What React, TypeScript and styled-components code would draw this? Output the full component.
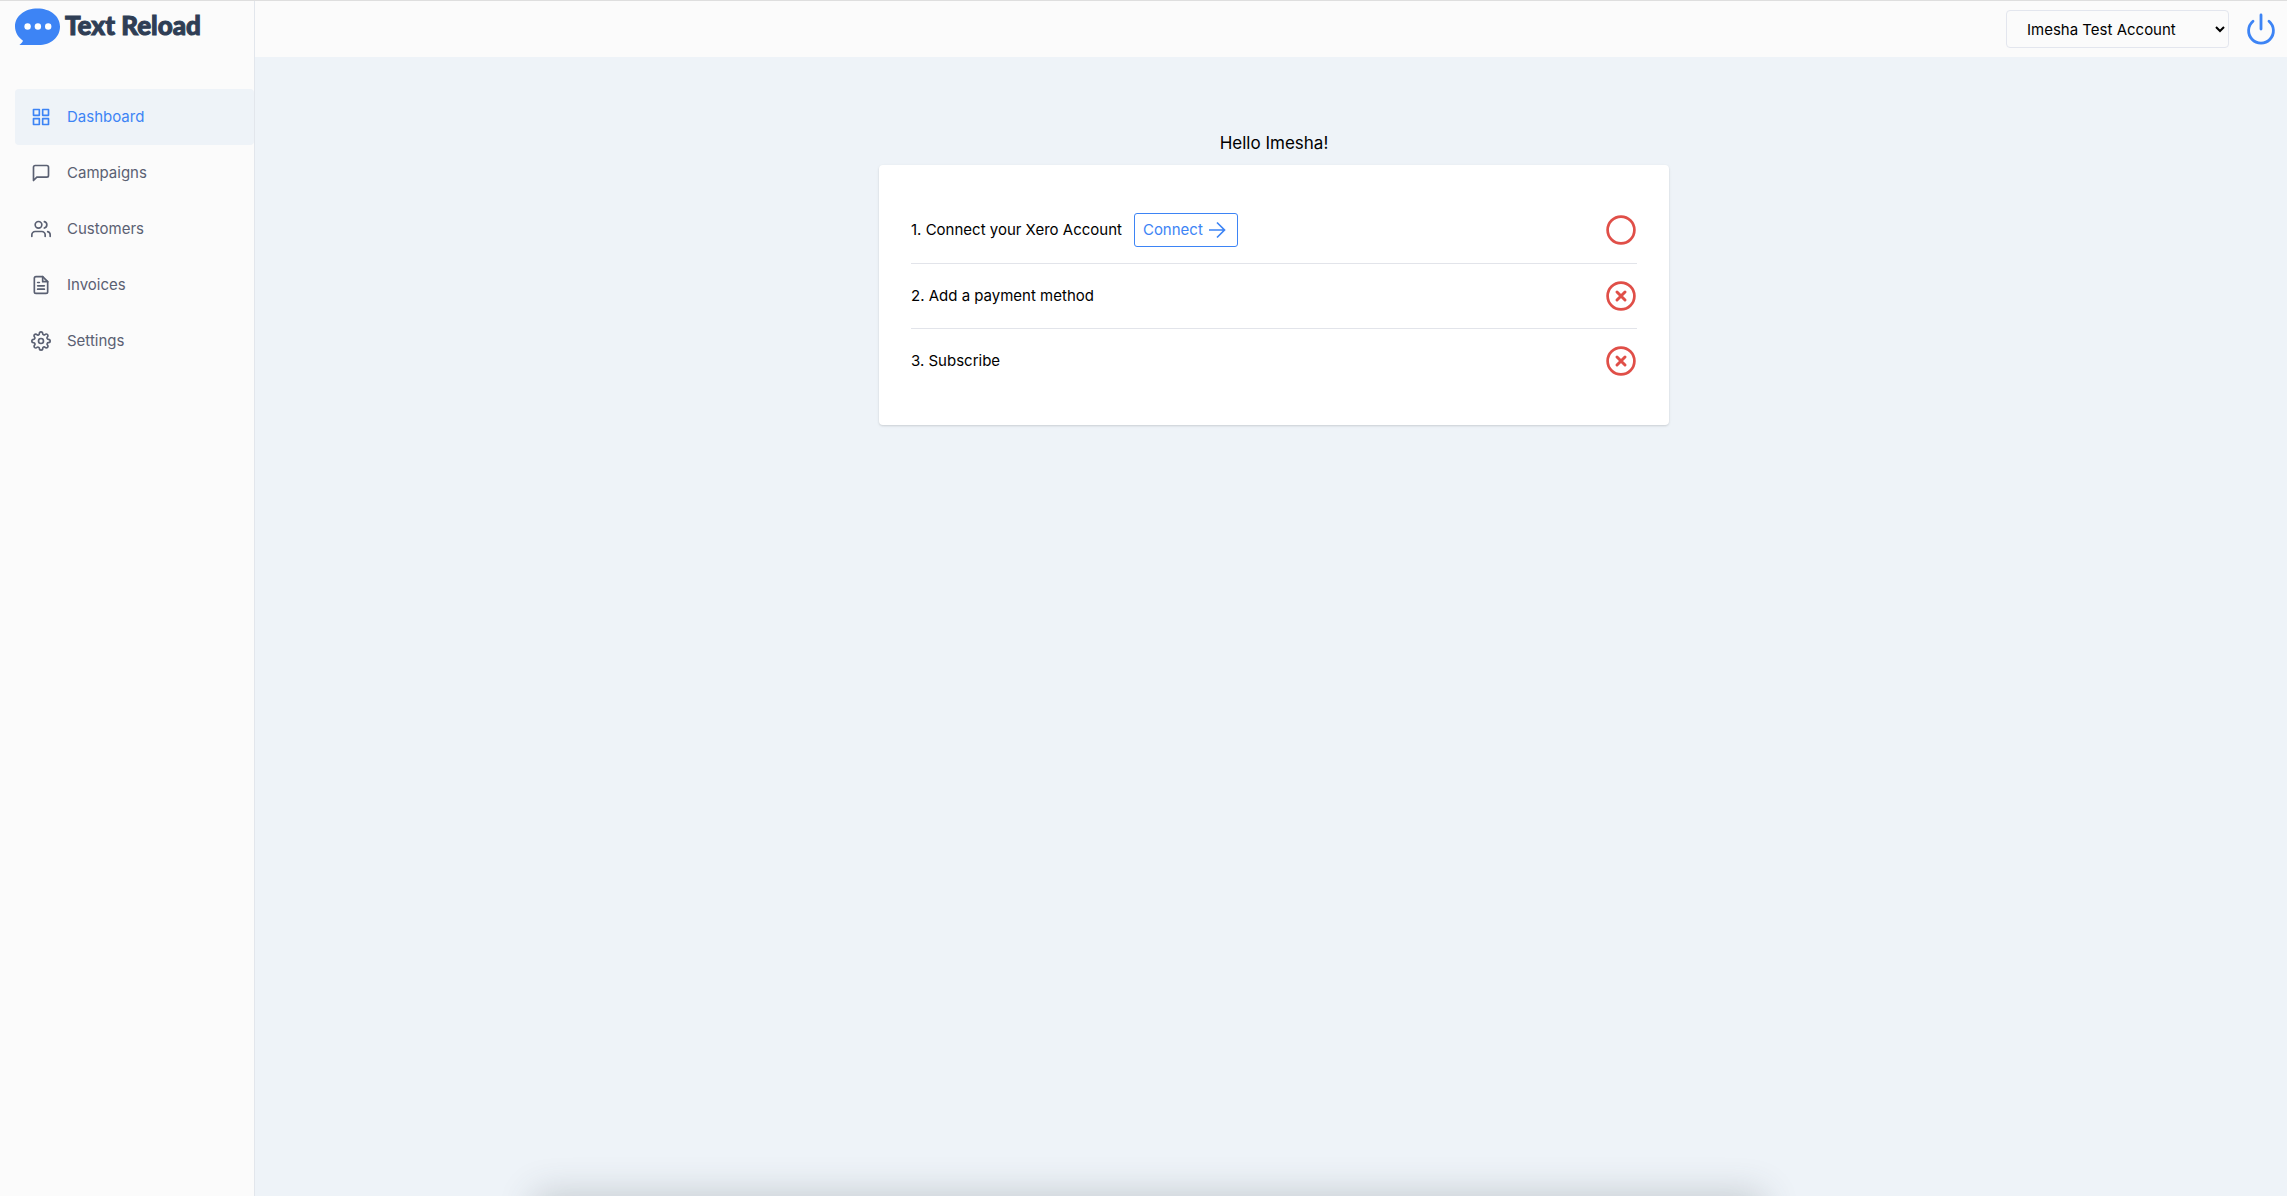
import React from "react";
import styled, { createGlobalStyle, css } from "styled-components";
import { FiFileText, FiGrid, FiMessageSquare, FiSettings, FiUsers } from "react-icons/fi";

const Global = createGlobalStyle`
  *, *::before, *::after { box-sizing: border-box; }
  body {
    margin: 0;
    background: #eef3f8;
    color: #000;
    font-family: Inter, "Liberation Sans", sans-serif;
    font-size: 15px;
    line-height: 24px;
  }
`;

const Shell = styled.div`
  display: flex;
  min-height: 100vh;
  border-top: 1px solid #dedede;
  position: relative;
  overflow: hidden;
`;

const Sidebar = styled.aside`
  flex: 0 0 255px;
  background: #fbfbfb;
  border-right: 1px solid #e2e6ec;
  padding-left: 15px;
`;

const Logo = styled.a`
  display: flex;
  align-items: center;
  gap: 4px;
  height: 52px;
  color: #2f3e55;
  text-decoration: none;
`;

const LogoText = styled.span`
  padding-bottom: 4px;
  font-family: Lato, sans-serif;
  font-size: 26px;
  font-weight: 900;
  line-height: 32px;
  white-space: nowrap;
  -webkit-text-stroke: 1px #2f3e55;
`;

const Nav = styled.nav`
  display: flex;
  flex-direction: column;
  margin-top: 36px;
`;

const NavLink = styled.a<{ $active?: boolean }>`
  display: flex;
  align-items: center;
  gap: 16px;
  height: 56px;
  padding: 0 16px;
  border-radius: 4px;
  color: #5a6072;
  text-decoration: none;
  ${(p) => p.$active && css`
    background: #eef3f8;
    color: #3d84f5;
  `}
`;

const Content = styled.div`
  flex: 1;
  min-width: 0;
`;

const TopBar = styled.header`
  display: flex;
  align-items: center;
  justify-content: flex-end;
  gap: 16px;
  height: 56px;
  padding-right: 10px;
  background: #fbfbfb;
`;

const AccountSelect = styled.select`
  width: 223px;
  height: 38px;
  padding: 0 0 0 16px;
  border: 1px solid #e3e6ee;
  border-radius: 4px;
  background: #fbfbfb;
  color: #000;
  font: inherit;
`;

const IconButton = styled.button`
  display: flex;
  padding: 0;
  border: 0;
  background: none;
  color: #3d84f5;
  cursor: pointer;
`;

const Main = styled.main`
  display: flex;
  flex-direction: column;
  align-items: center;
  gap: 8px;
  padding: 72px 16px 32px 22px;
`;

const Greeting = styled.h1`
  margin: 0;
  font-size: 17px;
  font-weight: 400;
  line-height: 28px;
`;

const Card = styled.section`
  width: 100%;
  max-width: 790px;
  padding: 32px;
  border-radius: 4px;
  background: #fff;
  box-shadow: 0 1px 3px rgba(0, 0, 0, 0.1), 0 1px 2px rgba(0, 0, 0, 0.06);
`;

const Steps = styled.ul`
  margin: 0;
  padding: 0;
  list-style: none;
`;

const Step = styled.li`
  display: flex;
  align-items: center;
  justify-content: space-between;
  padding: 16px 0;
  & + & { border-top: 1px solid #e2e4ea; }
`;

const StepLabel = styled.div`
  display: flex;
  align-items: center;
  gap: 12px;
`;

const ConnectButton = styled.button`
  display: flex;
  align-items: center;
  gap: 2px;
  height: 34px;
  padding: 0 8px;
  border: 1px solid #3d84f5;
  border-radius: 3px;
  background: #fff;
  color: #3d84f5;
  font: inherit;
  cursor: pointer;
`;

const DockShadow = styled.div`
  position: absolute;
  top: 100%;
  left: 23.5%;
  right: 23%;
  height: 40px;
  box-shadow: 0 0 36px 2px rgba(60, 70, 80, 0.24);
`;

const LogoMark = () => (
  <svg width="46" height="38" viewBox="0 0 46 38" aria-hidden="true">
    <path d="M22.500 0.500C9.500 0.500 0 8.300 0 18.300c0 6 3 11 8 14.400-.7 1.600-2 3-3.600 4.400H23.500c12.500 0 21.500-8 21.500-18.600C45 8.300 35.500.5 22.500.5z" fill="#3d84f5" />
    <g fill="#fff">
      <circle cx="12.600" cy="18.500" r="3.200" />
      <circle cx="22.900" cy="18.500" r="3.200" />
      <circle cx="33.200" cy="18.500" r="3.200" />
    </g>
  </svg>
);

const PowerIcon = () => (
  <svg width="32" height="32" viewBox="0 0 32 32" fill="none" stroke="currentColor" strokeWidth="2.800" strokeLinecap="round" aria-hidden="true">
    <path d="M16 2v14M8 8.200a12.400 12.400 0 1 0 16 0" />
  </svg>
);

const ArrowIcon = () => (
  <svg width="24" height="24" viewBox="0 0 24 24" fill="none" stroke="currentColor" strokeWidth="1.700" aria-hidden="true">
    <path d="M4 12h15.500M12 4.500l7.500 7.500-7.500 7.500" />
  </svg>
);

const StatusIcon = ({ failed }: { failed?: boolean }) => (
  <svg width="32" height="32" viewBox="0 0 32 32" fill="none" stroke="#e04f48" strokeWidth="2.700" strokeLinecap="round" role="img" aria-label={failed ? "Incomplete" : "Pending"}>
    <circle cx="16" cy="16" r="13.400" />
    {failed && <path strokeWidth="3" d="M12 12l8 8M20 12l-8 8" />}
  </svg>
);

const links = [
  { label: "Dashboard", Icon: FiGrid },
  { label: "Campaigns", Icon: FiMessageSquare },
  { label: "Customers", Icon: FiUsers },
  { label: "Invoices", Icon: FiFileText },
  { label: "Settings", Icon: FiSettings },
];

export default function App() {
  return (
    <>
      <Global />
      <Shell>
        <Sidebar>
          <Logo href="#">
            <LogoMark />
            <LogoText>Text Reload</LogoText>
          </Logo>
          <Nav>
            {links.map(({ label, Icon }, i) => (
              <NavLink key={label} href="#" $active={i === 0}>
                <Icon size={20} />
                {label}
              </NavLink>
            ))}
          </Nav>
        </Sidebar>
        <Content>
          <TopBar>
            <AccountSelect aria-label="Account">
              <option>Imesha Test Account</option>
            </AccountSelect>
            <IconButton aria-label="Log out"><PowerIcon /></IconButton>
          </TopBar>
          <Main>
            <Greeting>Hello Imesha!</Greeting>
            <Card>
              <Steps>
                <Step>
                  <StepLabel>
                    1. Connect your Xero Account
                    <ConnectButton>Connect<ArrowIcon /></ConnectButton>
                  </StepLabel>
                  <StatusIcon />
                </Step>
                <Step><StepLabel>2. Add a payment method</StepLabel><StatusIcon failed /></Step>
                <Step><StepLabel>3. Subscribe</StepLabel><StatusIcon failed /></Step>
              </Steps>
            </Card>
          </Main>
        </Content>
        <DockShadow />
      </Shell>
    </>
  );
}
